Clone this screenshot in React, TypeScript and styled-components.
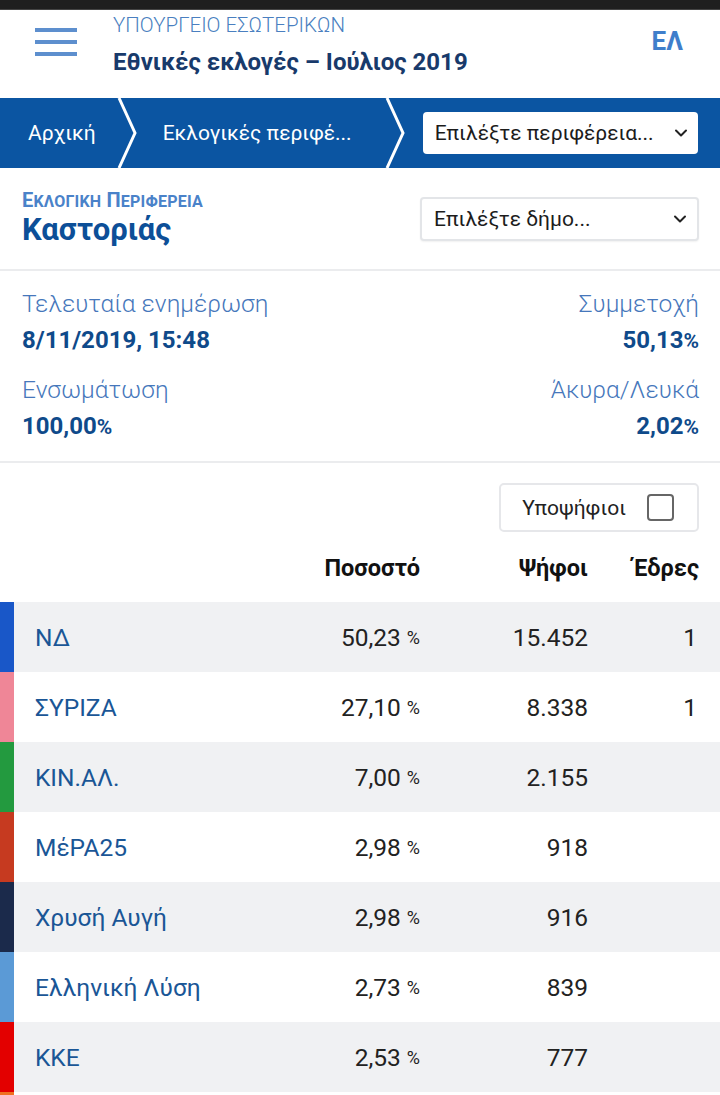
import React from "react";
import styled, { createGlobalStyle } from "styled-components";

const Global = createGlobalStyle`
  html, body { margin: 0; padding: 0; background: #fff; }
  body { font-family: Roboto, "Noto Sans", Arial, sans-serif; -webkit-font-smoothing: antialiased; }
  * { box-sizing: border-box; }
`;

const Page = styled.div`
  width: 720px;
  height: 1095px;
  overflow: hidden;
  background: #fff;
`;

const StatusBar = styled.div`
  height: 10px;
  background: #1f1f1f;
  border-bottom: 1px solid #444;
`;

const Header = styled.header`
  height: 88px;
  display: flex;
  align-items: flex-start;
  padding: 0 37px 0 35px;
`;

const Burger = styled.div`
  width: 42px;
  margin-top: 18px;
  display: flex;
  flex-direction: column;
  gap: 8px;
  span {
    display: block;
    height: 4px;
    background: #5d8fce;
  }
`;

const Titles = styled.div`
  margin-left: 36px;
  flex: 1;
  display: flex;
  flex-direction: column;
`;

const Ministry = styled.div`
  margin-top: 2px;
  font-size: 20.5px;
  font-weight: 300;
  color: #4a7fc0;
  line-height: 26px;
`;

const Election = styled.div`
  margin-top: 9px;
  font-size: 24px;
  font-weight: 700;
  color: #183a6b;
  line-height: 30px;
`;

const Lang = styled.div`
  margin-top: 16px;
  font-size: 26px;
  font-weight: 700;
  color: #3f7ecb;
`;

const Nav = styled.nav`
  height: 70px;
  background: #0b55a2;
  display: flex;
  align-items: center;
  padding-left: 28px;
`;

const Crumb = styled.span`
  color: #fff;
  font-size: 21px;
  white-space: nowrap;
`;

const Chevron = styled.svg<{ $m: string }>`
  flex: none;
  width: 22px;
  height: 70px;
  margin: ${(p) => p.$m};
`;

const Select = styled.div<{ $w: number; $h: number; $border?: boolean }>`
  flex: none;
  width: ${(p) => p.$w}px;
  height: ${(p) => p.$h}px;
  background: #fff;
  border-radius: 4px;
  border: ${(p) => (p.$border ? "2px solid #e3e5e8" : "none")};
  display: flex;
  align-items: center;
  justify-content: space-between;
  padding: 0 10px 0 12px;
  font-size: 21px;
  color: #1c1c1c;
  box-shadow: ${(p) => (p.$border ? "0 1px 2px rgba(0,0,0,0.06)" : "none")};
`;

const Region = styled.section`
  height: 103px;
  border-bottom: 2px solid #ebecee;
  display: flex;
  justify-content: space-between;
  align-items: flex-start;
  padding: 29px 21px 0 22px;
`;

const RegionLabel = styled.div`
  font-size: 20px;
  font-weight: 700;
  color: #4a82c9;
  line-height: 18px;
  margin-top: -6px;
  letter-spacing: 0.2px;
`;

const SmallCaps = styled.span`
  font-size: 16px;
`;

const RegionName = styled.div`
  font-size: 31px;
  font-weight: 700;
  color: #0c4f98;
  line-height: 38px;
`;

const Stats = styled.section`
  height: 192px;
  border-bottom: 2px solid #ebecee;
  display: grid;
  grid-template-columns: 1fr 1fr;
  row-gap: 17px;
  padding: 17px 21px 0 22px;
  align-content: start;
`;

const Stat = styled.div<{ $right?: boolean }>`
  text-align: ${(p) => (p.$right ? "right" : "left")};
`;

const StatLabel = styled.div`
  font-size: 24.5px;
  font-weight: 300;
  color: #4677bb;
  line-height: 32px;
`;

const StatValue = styled.div`
  font-size: 24px;
  font-weight: 700;
  color: #0f4a8a;
  line-height: 32px;
  margin-top: 4px;
  span { font-size: 21px; }
`;

const FilterRow = styled.div`
  display: flex;
  justify-content: flex-end;
  padding: 20px 21px 0 0;
`;

const Toggle = styled.div`
  width: 200px;
  height: 49px;
  border: 2px solid #e6e7ea;
  border-radius: 5px;
  display: flex;
  align-items: center;
  justify-content: flex-end;
  padding-right: 23px;
  gap: 21px;
  font-size: 21px;
  color: #222;
`;

const Box = styled.div`
  width: 27px;
  height: 27px;
  border: 2px solid #666;
  border-radius: 4px;
`;

const Grid = styled.div`
  display: grid;
  grid-template-columns: 14px 1fr 150px 168px 132px;
`;

const HeadCell = styled.div<{ $pad?: number }>`
  height: 70px;
  display: flex;
  align-items: center;
  justify-content: flex-end;
  font-size: 23.5px;
  font-weight: 700;
  color: #111;
  padding-top: 2px;
  padding-right: ${(p) => p.$pad ?? 0}px;
`;

const Row = styled.div<{ $alt: boolean }>`
  display: contents;
  & > div { background: ${(p) => (p.$alt ? "#f0f1f3" : "#fff")}; }
`;

const Stripe = styled.div<{ $c: string }>`
  height: 70px;
  && { background: ${(p) => p.$c}; }
`;

const Cell = styled.div<{ $left?: boolean; $pad?: number }>`
  height: 70px;
  display: flex;
  align-items: center;
  justify-content: ${(p) => (p.$left ? "flex-start" : "flex-end")};
  padding-left: ${(p) => (p.$left ? 21 : 0)}px;
  padding-right: ${(p) => p.$pad ?? 0}px;
  font-size: 24.5px;
  color: ${(p) => (p.$left ? "#1a5696" : "#222")};
  span { font-size: 18px; margin-left: 6px; }
`;

const Arrow = () => (
  <svg width="14" height="10" viewBox="0 0 14 10">
    <path d="M2 2.5 L7 7.5 L12 2.5" fill="none" stroke="#222" strokeWidth="2" strokeLinecap="round" strokeLinejoin="round" />
  </svg>
);

const parties = [
  { name: "ΝΔ", c: "#1957c8", pct: "50,23", votes: "15.452", seats: "1" },
  { name: "ΣΥΡΙΖΑ", c: "#ef8697", pct: "27,10", votes: "8.338", seats: "1" },
  { name: "ΚΙΝ.ΑΛ.", c: "#239a3f", pct: "7,00", votes: "2.155", seats: "" },
  { name: "ΜέΡΑ25", c: "#c63a20", pct: "2,98", votes: "918", seats: "" },
  { name: "Χρυσή Αυγή", c: "#1b2a4b", pct: "2,98", votes: "916", seats: "" },
  { name: "Ελληνική Λύση", c: "#5b9ad6", pct: "2,73", votes: "839", seats: "" },
  { name: "ΚΚΕ", c: "#e30000", pct: "2,53", votes: "777", seats: "" },
  { name: "", c: "#f07020", pct: "", votes: "", seats: "" },
];

export default function App() {
  return (
    <Page>
      <Global />
      <StatusBar />
      <Header>
        <Burger>
          <span />
          <span />
          <span />
        </Burger>
        <Titles>
          <Ministry>ΥΠΟΥΡΓΕΙΟ ΕΣΩΤΕΡΙΚΩΝ</Ministry>
          <Election>Εθνικές εκλογές – Ιούλιος 2019</Election>
        </Titles>
        <Lang>ΕΛ</Lang>
      </Header>
      <Nav>
        <Crumb>Αρχική</Crumb>
        <Chevron $m="0 25px 0 20px" viewBox="0 0 22 70">
          <path d="M3 0 L19 35 L3 70" fill="none" stroke="#fff" strokeWidth="3" />
        </Chevron>
        <Crumb>Εκλογικές περιφέ...</Crumb>
        <Chevron $m="0 17px 0 32px" viewBox="0 0 22 70">
          <path d="M3 0 L19 35 L3 70" fill="none" stroke="#fff" strokeWidth="3" />
        </Chevron>
        <Select $w={275} $h={42}>
          Επιλέξτε περιφέρεια...
          <Arrow />
        </Select>
      </Nav>
      <Region>
        <div>
          <RegionLabel>
            Ε<SmallCaps>ΚΛΟΓΙΚΗ</SmallCaps> Π<SmallCaps>ΕΡΙΦΕΡΕΙΑ</SmallCaps>
          </RegionLabel>
          <RegionName>Καστοριάς</RegionName>
        </div>
        <Select $w={279} $h={44} $border>
          Επιλέξτε δήμο...
          <Arrow />
        </Select>
      </Region>
      <Stats>
        <Stat>
          <StatLabel>Τελευταία ενημέρωση</StatLabel>
          <StatValue>8/11/2019, 15:48</StatValue>
        </Stat>
        <Stat $right>
          <StatLabel>Συμμετοχή</StatLabel>
          <StatValue>50,13<span>%</span></StatValue>
        </Stat>
        <Stat>
          <StatLabel>Ενσωμάτωση</StatLabel>
          <StatValue>100,00<span>%</span></StatValue>
        </Stat>
        <Stat $right>
          <StatLabel>Άκυρα/Λευκά</StatLabel>
          <StatValue>2,02<span>%</span></StatValue>
        </Stat>
      </Stats>
      <FilterRow>
        <Toggle>
          Υποψήφιοι
          <Box />
        </Toggle>
      </FilterRow>
      <Grid>
        <HeadCell />
        <HeadCell />
        <HeadCell>Ποσοστό</HeadCell>
        <HeadCell>Ψήφοι</HeadCell>
        <HeadCell $pad={21}>Έδρες</HeadCell>
        {parties.map((p, i) => (
          <Row key={i} $alt={i % 2 === 0}>
            <Stripe $c={p.c} />
            <Cell $left>{p.name}</Cell>
            <Cell>
              {p.pct}
              {p.pct && <span>%</span>}
            </Cell>
            <Cell>{p.votes}</Cell>
            <Cell $pad={23}>{p.seats}</Cell>
          </Row>
        ))}
      </Grid>
    </Page>
  );
}
